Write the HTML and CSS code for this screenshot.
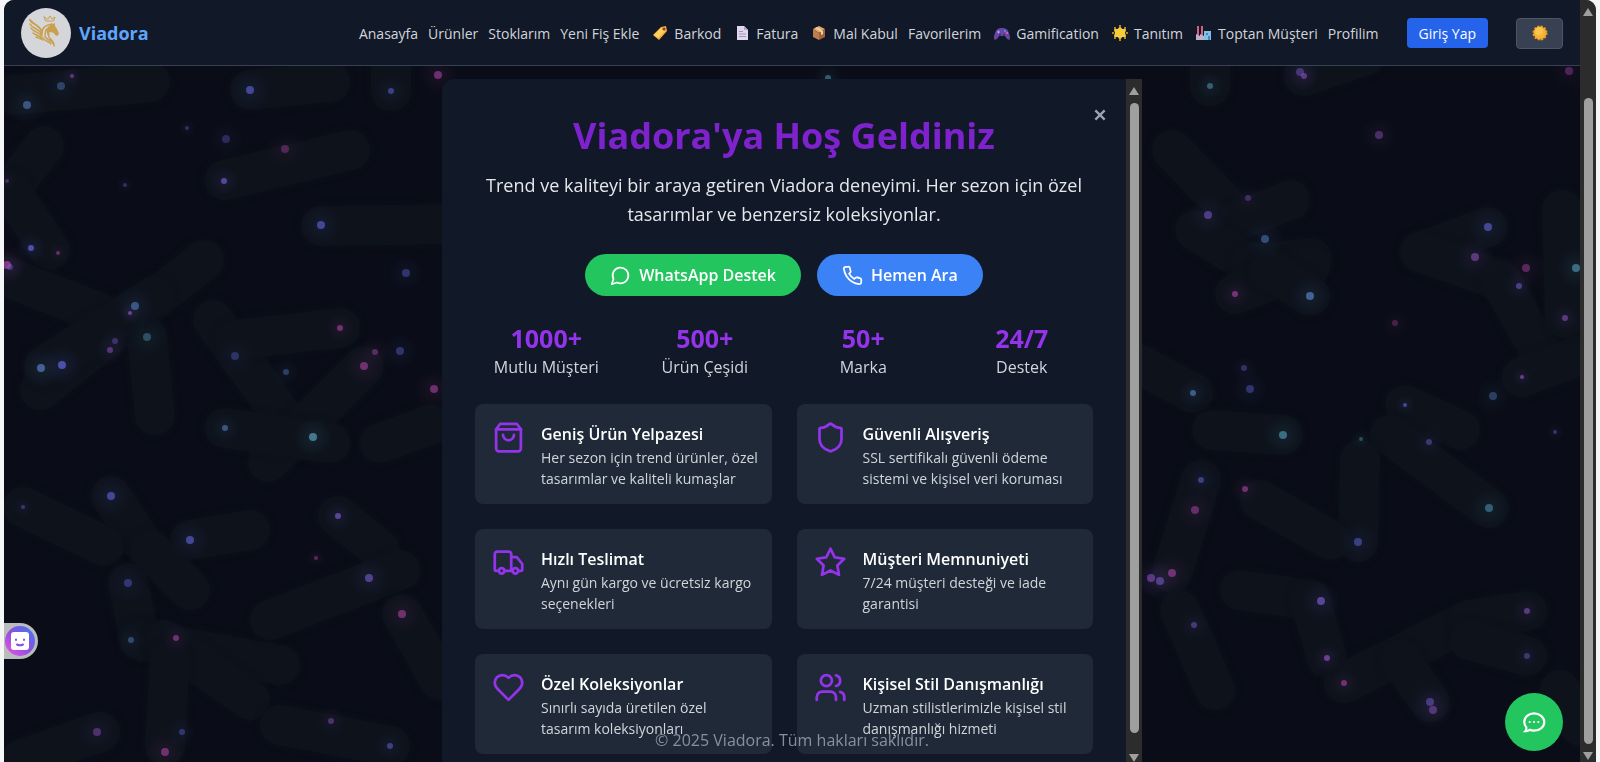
FILE: index.html
```
<!DOCTYPE html>
<html lang="tr">
<head>
  <meta charset="UTF-8">
  <meta name="viewport" content="width=device-width, initial-scale=1.0">
  <title>Viadora</title>
  <link rel="stylesheet" href="styles.css">
</head>
<body>
  <div class="window">
    <div class="page">

      <header class="header">
        <a class="brand" href="#">
          <svg class="brand-logo" viewBox="0 0 50 50" aria-hidden="true">
            <circle cx="25" cy="25" r="25" fill="#d5d6d9"/>
            <g fill="none" stroke="#c9a04e" stroke-linecap="round" stroke-linejoin="round">
              <path stroke-width="1" d="M23 9l1.500 4h8l1.500-4-3 2-2-3-2 3z"/>
              <path stroke-width="2" d="M9 12c2 4 10 5 12 12"/>
              <path stroke-width="1.500" d="M9 16c2 4 9 5 12 10M10 20c2 4 8 4 11 8M12 25c2 2 6 2 9 5M15 29c2 1 4 1 7 3"/>
              <path stroke-width="1.500" d="M21 25c0-5 4-8 10-9M24 27c0-5 3-8 8-9M28 26c-3 4 6 6 5 12M24 28c0 4 8 4 9 9M22 30c2 4 6 3 8 6"/>
            </g>
            <path fill="#c9a04e" d="M28 18c2-2 5-2 6-3v3c2 2 3 5 4 8l-2 2-2-1-1-2-4-1c-2 1-2 3-1 5-3-3-3-8 0-11z"/>
          </svg>
          <span class="brand-name">Viadora</span>
        </a>

        <nav class="nav">
          <a href="#">Anasayfa</a>
          <a href="#">Ürünler</a>
          <a href="#">Stoklarım</a>
          <a href="#">Yeni Fiş Ekle</a>
          <a class="with-icon" href="#">
            <svg viewBox="0 0 16 16" aria-hidden="true"><path fill="#f5b03c" d="M9 2l5-1 1 5-8 9-6-5z"/><path fill="#ffd05c" d="M9 3l4 3-7 7-4-3z"/><circle cx="12" cy="4" r="1.500" fill="#8c3b3b"/></svg>
            Barkod
          </a>
          <a class="with-icon" href="#">
            <svg viewBox="0 0 16 16" aria-hidden="true"><path fill="#e0d8f0" d="M3 1h7l4 4v10H3z"/><path fill="#b3a4ce" d="M10 1l4 4h-4z"/><path stroke="#a394bd" d="M5 6.500h4M5 9h7M5 11.500h7"/></svg>
            Fatura
          </a>
          <a class="with-icon" href="#">
            <svg viewBox="0 0 16 16" aria-hidden="true"><path fill="#e2a86f" d="M8 1l6 3-6 4-6-4z"/><path fill="#bd7d4c" d="M2 4l6 4v7l-6-3z"/><path fill="#a26438" d="M14 4L8 8v7l6-3z"/><path fill="#f0d0a0" d="M4 3l6 4v3l2-1V6L6 2z"/></svg>
            Mal Kabul
          </a>
          <a href="#">Favorilerim</a>
          <a class="with-icon" href="#">
            <svg viewBox="0 0 16 16" aria-hidden="true"><path fill="#6846a5" d="M4 4l2-1h4l2 1c2 0 4 6 4 9 0 3-3 2-5-2H5c-2 4-5 5-5 2 0-3 2-9 4-9z"/><path stroke="#b9a0e5" d="M3 7h3M4.500 5.500v3"/><circle cx="11" cy="6" r="1" fill="#49a2e8"/><circle cx="13" cy="8" r="1" fill="#e96ba0"/><circle cx="6" cy="10" r="1" fill="#403075"/><circle cx="10" cy="10" r="1" fill="#403075"/></svg>
            Gamification
          </a>
          <a class="with-icon" href="#">
            <svg viewBox="0 0 16 16" aria-hidden="true"><path fill="#f7cc3c" stroke="#f7cc3c" stroke-width="2" stroke-linejoin="round" d="M8 3l2 2 3 0-1 3 1 3-3 0-2 2-2-2-3 0 1-3-1-3 3 0z"/><path stroke="#efad2b" stroke-linecap="round" stroke-width="2" d="M8 1v0M15 8v0M1 8v0M3 3v0M13 3v0M3 13v0M13 13v0M8 15v0"/></svg>
            Tanıtım
          </a>
          <a class="with-icon" href="#">
            <svg viewBox="0 0 16 16" aria-hidden="true"><path fill="#d35f83" d="M1 1h2v10H1zM5 1h2v10H5z"/><path fill="#bdb0cb" d="M0 9l4 2V9l4 2v4H0z"/><path fill="#82bfe7" d="M8 6h7v9H8z"/><path fill="#3f86c8" d="M10 8h2v2h-2zM12 11h2v4h-2z"/></svg>
            Toptan Müşteri
          </a>
          <a href="#">Profilim</a>
          <button class="login" type="button">Giriş Yap</button>
          <button class="theme" type="button" aria-label="Tema">
            <svg viewBox="0 0 16 16" aria-hidden="true"><circle cx="8" cy="8" r="6.500" fill="#f6b434"/><circle cx="8" cy="8" r="6.500" fill="none" stroke="#f09a26" stroke-width="2" stroke-dasharray="2 1.400"/><circle cx="7" cy="6" r="4" fill="#fbc650"/></svg>
          </button>
        </nav>
      </header>

      <main class="main">
        <canvas class="stars" id="stars"></canvas>

        <section class="modal">
          <div class="modal-body">
            <button class="close" type="button" aria-label="Kapat">
              <svg viewBox="0 0 12 12" aria-hidden="true"><path d="M2 2l8 8M10 2l-8 8"/></svg>
            </button>
            <h1>Viadora'ya Hoş Geldiniz</h1>
            <p class="intro">Trend ve kaliteyi bir araya getiren Viadora deneyimi. Her sezon için özel tasarımlar ve benzersiz koleksiyonlar.</p>

            <div class="actions">
              <a class="action whatsapp" href="#">
                <svg class="icon" viewBox="0 0 24 24" aria-hidden="true"><path d="M7.900 20A9 9 0 1 0 4 16.100L2 22Z"/></svg>
                WhatsApp Destek
              </a>
              <a class="action call" href="#">
                <svg class="icon" viewBox="0 0 24 24" aria-hidden="true"><path d="M22 16.920v3a2 2 0 0 1-2.180 2 19.790 19.790 0 0 1-8.630-3.070 19.500 19.500 0 0 1-6-6 19.790 19.790 0 0 1-3.070-8.670A2 2 0 0 1 4.110 2h3a2 2 0 0 1 2 1.720 12.840 12.840 0 0 0 .700 2.810 2 2 0 0 1-.450 2.110L8.090 9.910a16 16 0 0 0 6 6l1.270-1.270a2 2 0 0 1 2.110-.450 12.840 12.840 0 0 0 2.810.700A2 2 0 0 1 22 16.920z"/></svg>
                Hemen Ara
              </a>
            </div>

            <div class="stats">
              <div class="stat"><strong>1000+</strong><span>Mutlu Müşteri</span></div>
              <div class="stat"><strong>500+</strong><span>Ürün Çeşidi</span></div>
              <div class="stat"><strong>50+</strong><span>Marka</span></div>
              <div class="stat"><strong>24/7</strong><span>Destek</span></div>
            </div>

            <div class="features">
              <article class="feature">
                <svg class="icon" viewBox="0 0 24 24" aria-hidden="true"><path d="M6 2 3 6v14a2 2 0 0 0 2 2h14a2 2 0 0 0 2-2V6l-3-4Z"/><path d="M3 6h18"/><path d="M16 10a4 4 0 0 1-8 0"/></svg>
                <div>
                  <h2>Geniş Ürün Yelpazesi</h2>
                  <p>Her sezon için trend ürünler, özel<br>tasarımlar ve kaliteli kumaşlar</p>
                </div>
              </article>
              <article class="feature">
                <svg class="icon" viewBox="0 0 24 24" aria-hidden="true"><path d="M20 13c0 5-3.500 7.500-7.660 8.950a1 1 0 0 1-.670-.010C7.500 20.500 4 18 4 13V6a1 1 0 0 1 1-1c2 0 4.500-1.200 6.240-2.720a1.170 1.170 0 0 1 1.520 0C14.510 3.810 17 5 19 5a1 1 0 0 1 1 1z"/></svg>
                <div>
                  <h2>Güvenli Alışveriş</h2>
                  <p>SSL sertifikalı güvenli ödeme sistemi ve kişisel veri koruması</p>
                </div>
              </article>
              <article class="feature">
                <svg class="icon" viewBox="0 0 24 24" aria-hidden="true"><path d="M14 18V6a2 2 0 0 0-2-2H4a2 2 0 0 0-2 2v11a1 1 0 0 0 1 1h2"/><path d="M15 18H9"/><path d="M19 18h2a1 1 0 0 0 1-1v-3.650a1 1 0 0 0-.220-.624l-3.480-4.350A1 1 0 0 0 17.520 8H14"/><circle cx="17" cy="18" r="2"/><circle cx="7" cy="18" r="2"/></svg>
                <div>
                  <h2>Hızlı Teslimat</h2>
                  <p>Aynı gün kargo ve ücretsiz kargo seçenekleri</p>
                </div>
              </article>
              <article class="feature">
                <svg class="icon" viewBox="0 0 24 24" aria-hidden="true"><path d="M12 2l3.090 6.260L22 9.270l-5 4.870 1.180 6.880L12 17.770l-6.180 3.250L7 14.140 2 9.270l6.910-1.010L12 2z"/></svg>
                <div>
                  <h2>Müşteri Memnuniyeti</h2>
                  <p>7/24 müşteri desteği ve iade garantisi</p>
                </div>
              </article>
              <article class="feature">
                <svg class="icon" viewBox="0 0 24 24" aria-hidden="true"><path d="M19 14c1.490-1.460 3-3.210 3-5.500A5.500 5.500 0 0 0 16.500 3c-1.760 0-3 .500-4.500 2-1.500-1.500-2.740-2-4.500-2A5.500 5.500 0 0 0 2 8.500c0 2.300 1.500 4.050 3 5.500l7 7Z"/></svg>
                <div>
                  <h2>Özel Koleksiyonlar</h2>
                  <p>Sınırlı sayıda üretilen özel<br>tasarım koleksiyonları</p>
                </div>
              </article>
              <article class="feature">
                <svg class="icon" viewBox="0 0 24 24" aria-hidden="true"><path d="M16 21v-2a4 4 0 0 0-4-4H6a4 4 0 0 0-4 4v2"/><circle cx="9" cy="7" r="4"/><path d="M22 21v-2a4 4 0 0 0-3-3.870"/><path d="M16 3.130a4 4 0 0 1 0 7.750"/></svg>
                <div>
                  <h2>Kişisel Stil Danışmanlığı</h2>
                  <p>Uzman stilistlerimizle kişisel stil danışmanlığı hizmeti</p>
                </div>
              </article>
            </div>
          </div>

          <div class="scrollbar modal-scrollbar">
            <span class="arrow-up"></span>
            <span class="thumb"></span>
            <span class="arrow-down"></span>
          </div>
        </section>

        <footer class="footer">© 2025 Viadora. Tüm hakları saklıdır.</footer>

        <button class="chat" type="button" aria-label="Sohbet">
          <svg viewBox="0 0 24 24" aria-hidden="true"><path d="M4 20.500c1-1 1.200-2 1-3.500a8 8 0 0 1-2-5C3 7.600 7 4 12 4s9.500 3.600 9.500 8-4 8-9.500 8c-1.500 0-3-.300-4-.800-1 .800-2.500 1.300-4 1.300z"/><path d="M8 12h.010M12 12h.010M16 12h.010"/></svg>
        </button>
      </main>
    </div>

    <div class="scrollbar page-scrollbar">
      <span class="arrow-up"></span>
      <span class="thumb"></span>
      <span class="arrow-down"></span>
    </div>
  </div>

  <button class="assistant" type="button" aria-label="Asistan">
    <svg viewBox="0 0 30 30" aria-hidden="true">
      <defs>
        <linearGradient id="assistant-bg" x1="0" y1="1" x2="1" y2="0">
          <stop offset="0" stop-color="#f653e6"/>
          <stop offset="0.500" stop-color="#8a4fe0"/>
          <stop offset="1" stop-color="#3d7bf5"/>
        </linearGradient>
      </defs>
      <circle cx="15" cy="15" r="15" fill="url(#assistant-bg)"/>
      <rect x="6" y="6" width="18" height="18" rx="3" fill="#fff"/>
      <path fill="none" stroke="#8a4fe0" stroke-width="2" stroke-linecap="round" d="M11 13.500v.500M19 13.500v.500M12 18.500c2 1 4 1 6 0"/>
    </svg>
  </button>

  <script src="script.js"></script>
</body>
</html>
```

FILE: styles.css
```
* {
  box-sizing: border-box;
}

body {
  margin: 0;
  background-color: #f5f6f7;
  color: #e5e7eb;
  font-family: "Open Sans", "Noto Sans", sans-serif;
  font-size: 16px;
}

a {
  color: inherit;
  text-decoration: none;
}

button {
  font: inherit;
  color: inherit;
  padding: 0;
  border: none;
  cursor: pointer;
}

.window {
  display: flex;
  height: 100vh;
  margin: 0 4px;
  border-radius: 10px 10px 0 0;
  overflow: hidden;
  background-color: #0a0d17;
}

.page {
  flex: 1;
  min-width: 0;
  display: flex;
  flex-direction: column;
}

/* Header */
.header {
  display: flex;
  align-items: center;
  justify-content: space-between;
  padding: 8px 17px 7px;
  background-color: #111827;
  border-bottom: 1px solid #374151;
}

.brand {
  display: flex;
  align-items: center;
  gap: 8px;
}

.brand-logo {
  width: 50px;
  height: 50px;
}

.brand-name {
  font-size: 18px;
  font-weight: 700;
  color: #60a5fa;
}

.nav {
  display: flex;
  align-items: center;
  gap: 10px;
  font-size: 14px;
  color: #d1d5db;
  white-space: nowrap;
}

.with-icon {
  display: flex;
  align-items: center;
  gap: 6px;
  padding-left: 3px;
}

.with-icon svg,
.theme svg {
  width: 16px;
  height: 16px;
}

.login {
  height: 30px;
  margin: 0 18px;
  padding: 0 12px;
  border-radius: 4px;
  background-color: #2563eb;
  color: #fff;
}

.theme {
  display: flex;
  align-items: center;
  justify-content: center;
  width: 47px;
  height: 31px;
  border: 1px solid #4b5563;
  border-radius: 4px;
  background-color: #374151;
}

/* Background */
.main {
  position: relative;
  flex: 1;
  min-height: 0;
  display: flex;
  justify-content: center;
  padding-top: 13px;
  overflow: hidden;
}

.stars {
  position: absolute;
  inset: 0;
  width: 100%;
  height: 100%;
}

/* Welcome modal */
.modal {
  position: relative;
  display: flex;
  width: 100%;
  max-width: 700px;
  border-radius: 12px 0 0 0;
  background-color: #111827;
  overflow: hidden;
}

.modal-body {
  position: relative;
  flex: 1;
  min-width: 0;
  padding: 32px 33px;
}

.close {
  position: absolute;
  top: 28px;
  right: 18px;
  display: flex;
  padding: 1px;
  background: none;
}

.close svg {
  width: 14px;
  height: 14px;
  stroke: #9ca3af;
  stroke-width: 2;
}

.modal h1 {
  margin: 0 0 10px;
  font-size: 36px;
  line-height: 50px;
  text-align: center;
  color: #7e22ce;
}

.intro {
  margin: 0 0 25px;
  font-size: 18px;
  line-height: 29px;
  text-align: center;
}

.icon {
  flex: none;
  fill: none;
  stroke: currentColor;
  stroke-width: 2;
  stroke-linecap: round;
  stroke-linejoin: round;
}

.actions {
  display: flex;
  justify-content: center;
  gap: 16px;
  margin-bottom: 26px;
}

.action {
  display: flex;
  align-items: center;
  gap: 8px;
  height: 42px;
  padding: 0 25px;
  border-radius: 21px;
  color: #fff;
  font-weight: 600;
}

.action .icon {
  width: 21px;
  height: 21px;
}

.whatsapp {
  background-color: #22c55e;
}

.call {
  background-color: #3b82f6;
}

.stats {
  display: grid;
  grid-template-columns: repeat(4, 1fr);
  gap: 16px;
  margin-bottom: 25px;
  text-align: center;
}

.stat strong {
  display: block;
  font-size: 25px;
  line-height: 33px;
  color: #9333ea;
}

.stat span {
  display: block;
  line-height: 24px;
  color: #d1d5db;
}

.features {
  display: grid;
  grid-template-columns: 1fr 1fr;
  gap: 25px;
}

.feature {
  display: flex;
  gap: 16px;
  padding: 17px 8px 15px 17px;
  border-radius: 8px;
  background-color: #1f2937;
}

.feature .icon {
  width: 33px;
  height: 33px;
  color: #9333ea;
}

.feature h2 {
  margin: 0;
  font-size: 16px;
  font-weight: 600;
  line-height: 26px;
  color: #fff;
}

.feature p {
  margin: 0;
  font-size: 14px;
  line-height: 21px;
  color: #d1d5db;
}

/* Scrollbars */
.scrollbar {
  flex: none;
  display: flex;
  flex-direction: column;
  align-items: center;
  gap: 8px;
  width: 16px;
  background-color: #2c2c2c;
}

.arrow-up,
.arrow-down {
  border: 5px solid transparent;
}

.arrow-up {
  border-top: none;
  border-bottom: 8px solid #9f9f9f;
}

.arrow-down {
  border-bottom: none;
  border-top: 8px solid #9f9f9f;
}

.thumb {
  flex: 1;
  width: 9px;
  border-radius: 5px;
  background-color: #9f9f9f;
}

.page-scrollbar {
  padding: 8px 0 2px;
}

.page-scrollbar .thumb {
  margin-top: 74px;
}

.modal-scrollbar {
  height: calc(100vh - 79px);
  padding-top: 8px;
}

.modal-scrollbar .thumb {
  margin-bottom: 13px;
}

/* Floating items */
.footer {
  position: absolute;
  left: 0;
  right: 0;
  bottom: 8px;
  line-height: 28px;
  text-align: center;
  color: #9ca3af;
  opacity: 0.85;
}

.chat {
  position: absolute;
  right: 17px;
  bottom: 11px;
  display: flex;
  align-items: center;
  justify-content: center;
  width: 58px;
  height: 58px;
  border-radius: 50%;
  background-color: #22c55e;
}

.chat svg {
  width: 26px;
  height: 26px;
  fill: none;
  stroke: #fff;
  stroke-width: 2;
  stroke-linecap: round;
}

.assistant {
  position: fixed;
  left: 0;
  bottom: 103px;
  display: flex;
  padding: 3px 3px 3px 5px;
  border-radius: 0 18px 18px 0;
  background-color: rgba(245, 245, 245, 0.75);
}

.assistant svg {
  width: 30px;
  height: 30px;
}
```

FILE: script.js
```
const canvas = document.getElementById('stars');
const ctx = canvas.getContext('2d');

const colors = {
  i: '99,102,221',
  v: '130,100,225',
  p: '160,90,215',
  m: '195,75,185',
  b: '96,145,220',
  t: '85,160,190'
};

// x, y, radius, color, opacity
const stars = [
  [23, 39, 4, 'b', 0.5], [57, 20, 4, 'b', 0.35], [68, 10, 2, 'p', 0.5], [246, 24, 4, 'i', 0.6],
  [387, 25, 3, 'i', 0.5], [434, 9, 4, 'm', 0.5], [183, 62, 2, 'v', 0.35], [222, 73, 4, 'v', 0.3],
  [281, 83, 4, 'm', 0.35], [220, 115, 3, 'v', 0.6], [3, 115, 2, 'p', 0.35], [121, 119, 2, 'v', 0.35],
  [317, 159, 4, 'i', 0.6], [27, 182, 3, 'i', 0.7], [54, 187, 2, 'm', 0.45], [3, 199, 4, 'm', 0.6],
  [6, 201, 3, 'v', 0.4], [402, 207, 4, 'i', 0.4], [131, 240, 4, 'b', 0.5], [126, 247, 2, 'p', 0.6],
  [143, 271, 4, 't', 0.4], [111, 275, 3, 'v', 0.35], [106, 284, 3, 'p', 0.45], [37, 302, 4, 'b', 0.6],
  [58, 299, 4, 'i', 0.7], [336, 262, 3, 'm', 0.5], [231, 290, 4, 'i', 0.35], [371, 286, 3, 'm', 0.4],
  [396, 285, 4, 'i', 0.4], [360, 300, 4, 'm', 0.5], [282, 306, 3, 'b', 0.35], [430, 323, 4, 'm', 0.5],
  [221, 362, 3, 'b', 0.5], [309, 371, 4, 't', 0.7], [107, 430, 4, 'i', 0.6], [19, 441, 2, 'v', 0.4],
  [334, 450, 3, 'v', 0.6], [186, 474, 4, 'i', 0.6], [312, 492, 2, 'm', 0.4], [124, 517, 4, 'i', 0.4],
  [365, 512, 4, 'v', 0.55], [398, 548, 4, 'm', 0.5], [127, 574, 3, 'b', 0.4], [172, 572, 3, 'm', 0.5],
  [93, 666, 4, 'p', 0.4], [178, 666, 3, 'i', 0.4], [161, 686, 4, 'm', 0.5], [327, 655, 3, 'p', 0.4],
  [386, 680, 3, 'i', 0.5], [824, 12, 3, 't', 0.5],
  [1206, 20, 3, 't', 0.5], [1296, 6, 4, 'v', 0.4], [1300, 10, 3, 'p', 0.5], [1565, 5, 4, 'm', 0.35],
  [1375, 69, 4, 'p', 0.4], [1244, 132, 3, 'p', 0.35], [1204, 149, 4, 'v', 0.5], [1261, 173, 4, 'b', 0.45],
  [1484, 161, 4, 'i', 0.6], [1471, 191, 4, 'p', 0.5], [1522, 202, 4, 'm', 0.4], [1515, 220, 3, 'v', 0.5],
  [1572, 202, 4, 't', 0.6], [1231, 228, 3, 'm', 0.55], [1306, 230, 4, 'b', 0.6], [1391, 257, 3, 'm', 0.3],
  [1561, 252, 3, 'p', 0.5], [1240, 302, 3, 'v', 0.35], [1246, 323, 4, 'i', 0.4], [1189, 327, 3, 'b', 0.55],
  [1518, 311, 2, 'p', 0.6], [1489, 330, 4, 'b', 0.35], [1401, 339, 2, 'i', 0.6], [1357, 373, 2, 't', 0.4],
  [1425, 376, 3, 'v', 0.4], [1551, 366, 2, 'v', 0.4], [1279, 369, 4, 't', 0.6], [1197, 414, 3, 'i', 0.5],
  [1241, 423, 3, 'm', 0.5], [1191, 444, 4, 'm', 0.45], [1485, 442, 4, 't', 0.5], [1168, 507, 4, 'm', 0.5],
  [1156, 515, 4, 'v', 0.5], [1147, 512, 4, 'p', 0.5], [1190, 559, 3, 'v', 0.45], [1354, 476, 4, 'i', 0.5],
  [1317, 535, 4, 'v', 0.6], [1523, 545, 3, 'p', 0.5], [1523, 590, 3, 'v', 0.4], [1323, 592, 3, 'p', 0.6],
  [1340, 617, 3, 'm', 0.5], [1426, 636, 4, 'v', 0.45], [1429, 644, 4, 'p', 0.45]
];

const trails = [
  [11, 29, 146, 16], [246, 24, 326, 16], [387, 0, 387, 25], [221, 114, 346, 84], [317, 160, 456, 158],
  [6, 124, 40, 80], [6, 124, 46, 184], [0, 210, 130, 260], [36, 324, 200, 194], [143, 271, 151, 349],
  [40, 300, 150, 230], [209, 254, 296, 374], [336, 262, 231, 274], [360, 300, 264, 396], [221, 362, 326, 377],
  [376, 377, 426, 359], [334, 450, 376, 484], [107, 430, 136, 474], [19, 441, 100, 480], [186, 474, 246, 464],
  [124, 517, 136, 574], [186, 524, 146, 484], [136, 574, 276, 599], [161, 574, 246, 634], [166, 594, 161, 679],
  [266, 554, 396, 504], [16, 694, 96, 666], [276, 659, 386, 680], [398, 548, 436, 614],
  [1168, 84, 1236, 154], [1236, 154, 1286, 134], [1191, 164, 1246, 199], [1246, 199, 1308, 192],
  [1231, 228, 1306, 200], [1266, 204, 1306, 230], [1416, 186, 1484, 161], [1416, 186, 1496, 214],
  [1496, 214, 1541, 294], [1518, 311, 1576, 289], [1561, 252, 1558, 144], [1136, 299, 1189, 327],
  [1208, 364, 1279, 369], [1401, 339, 1456, 364], [1386, 369, 1485, 442], [1356, 394, 1354, 476],
  [1197, 414, 1168, 507], [1256, 434, 1326, 474], [1236, 524, 1306, 534], [1306, 534, 1323, 592],
  [1340, 617, 1466, 554], [1466, 554, 1523, 545], [1466, 574, 1523, 590], [1396, 594, 1426, 636],
  [1176, 544, 1211, 624], [1556, 624, 1576, 660], [1206, 0, 1206, 20], [1300, 10, 1360, -10]
];

function draw() {
  canvas.width = canvas.clientWidth;
  canvas.height = canvas.clientHeight;
  const scale = canvas.width / 1576;

  ctx.lineCap = 'round';
  ctx.lineWidth = 40;
  ctx.strokeStyle = '#0d121b';
  ctx.shadowColor = '#0d121b';
  ctx.shadowBlur = 6;
  trails.forEach(([x1, y1, x2, y2]) => {
    ctx.beginPath();
    ctx.moveTo(x1 * scale, y1);
    ctx.lineTo(x2 * scale, y2);
    ctx.stroke();
  });
  ctx.shadowBlur = 0;

  stars.forEach(([x, y, r, c, opacity]) => {
    const glow = ctx.createRadialGradient(x * scale, y, r, x * scale, y, r * 5);
    glow.addColorStop(0, `rgba(${colors[c]},${opacity * 0.14})`);
    glow.addColorStop(1, `rgba(${colors[c]},0)`);
    ctx.fillStyle = glow;
    ctx.fillRect(x * scale - 25, y - 25, 50, 50);
    ctx.fillStyle = `rgba(${colors[c]},${opacity})`;
    ctx.beginPath();
    ctx.arc(x * scale, y, r, 0, Math.PI * 2);
    ctx.fill();
  });
}

draw();
window.addEventListener('resize', draw);
```
